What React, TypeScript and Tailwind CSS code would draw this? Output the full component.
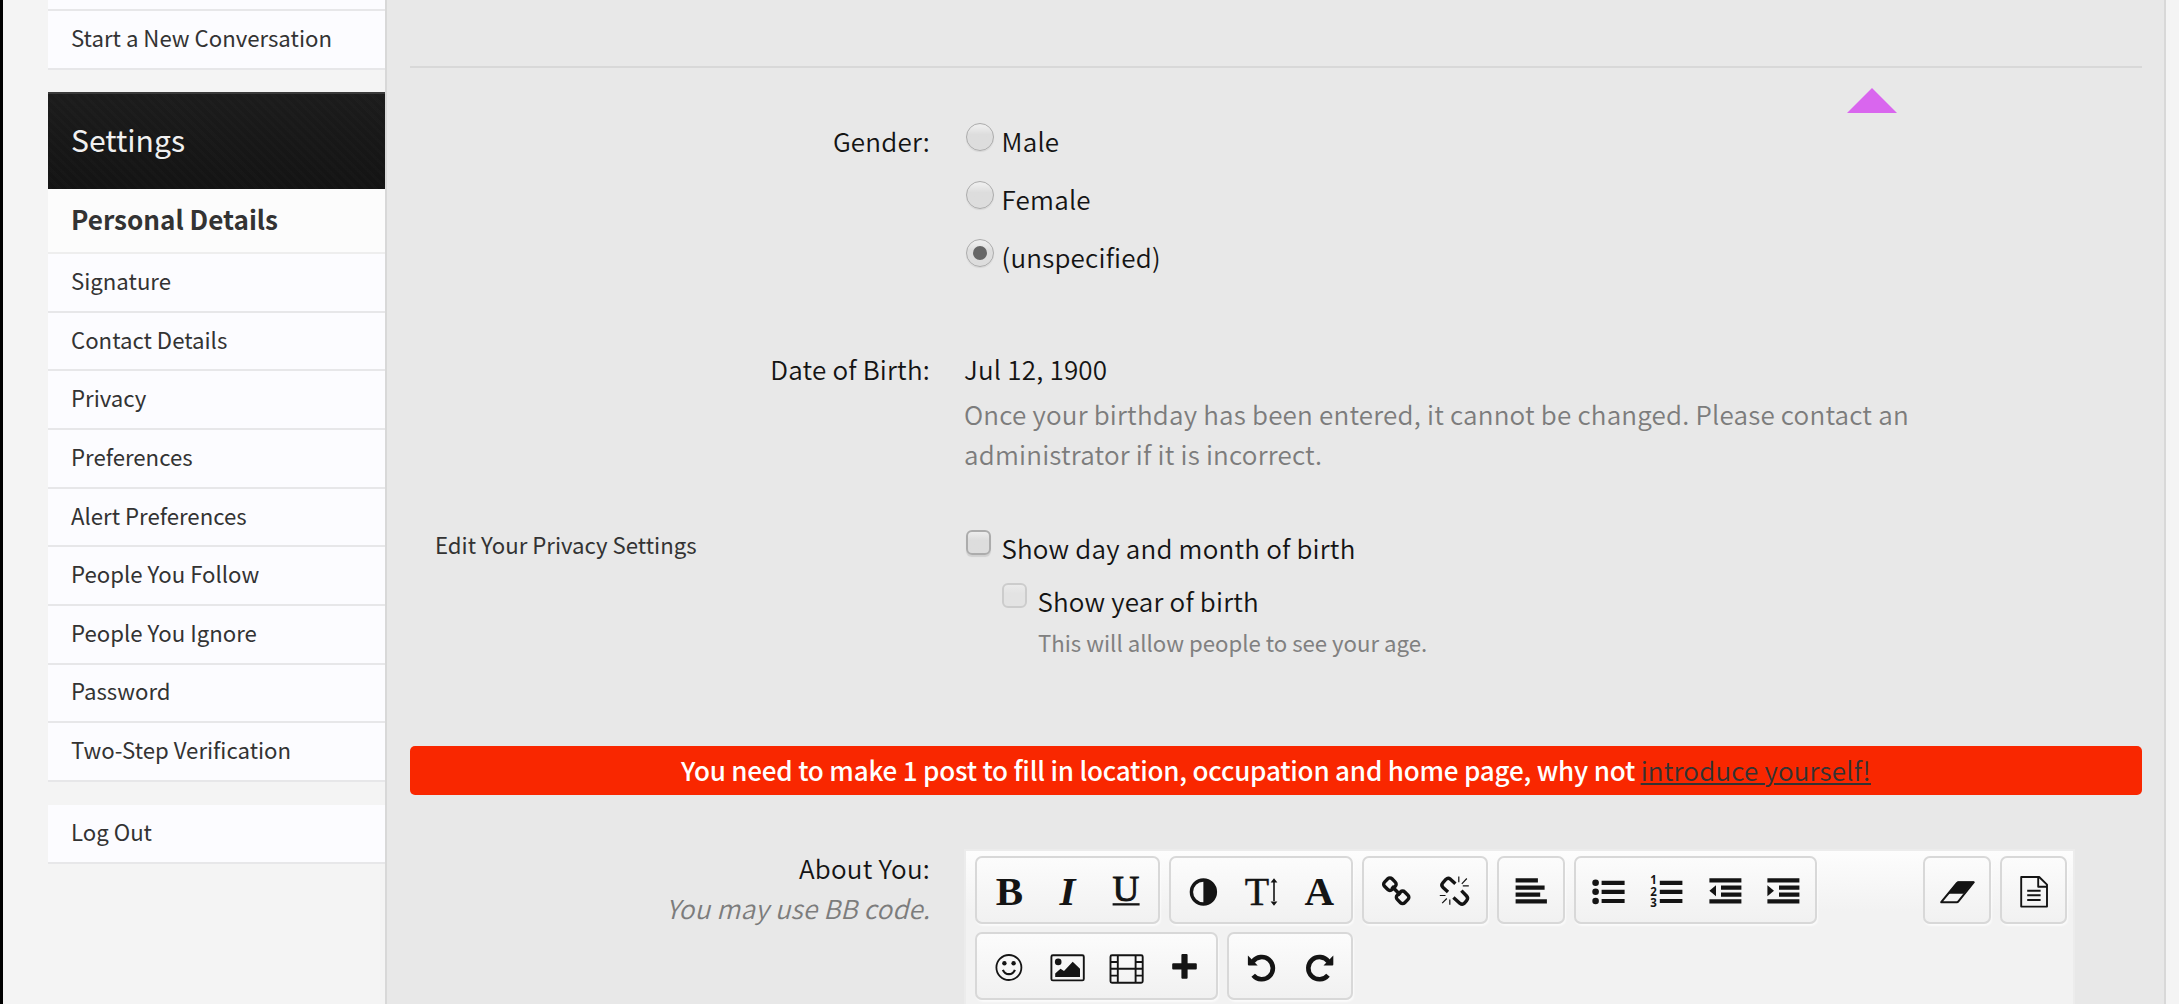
import React from 'react';
import clsx from 'clsx';

const INK = '#141414';

const settings = [
  'Signature',
  'Contact Details',
  'Privacy',
  'Preferences',
  'Alert Preferences',
  'People You Follow',
  'People You Ignore',
  'Password',
  'Two-Step Verification',
];

const SideLink: React.FC<{ children: React.ReactNode }> = ({ children }) => (
  <a className="flex h-[58.67px] items-center border-b-2 border-[#e7e7e9] bg-[#fcfcff] pb-[4.6px] pl-[23px] text-[22.2px] leading-none text-[#333333]">
    {children}
  </a>
);

const Radio: React.FC<{ label: string; checked?: boolean }> = ({ label, checked }) => (
  <label className="flex h-10 items-start">
    <span className="mt-[2px] ml-[2px] flex size-7 shrink-0 items-center justify-center rounded-full border border-[#acacac] bg-linear-to-b from-[#ededed] from-10% to-[#dddddd] to-40% shadow-[0_1px_1px_rgba(0,0,0,0.08)]">
      {checked && <span className="size-[14px] rounded-full bg-[#666666]" />}
    </span>
    <span className="ml-[7.6px]">{label}</span>
  </label>
);

const Checkbox: React.FC<{ label: string; disabled?: boolean }> = ({ label, disabled }) => (
  <label className="flex h-10 items-start">
    <span
      className={clsx(
        'mt-[2px] ml-[2px] size-[25px] shrink-0 rounded-[6px] border-2 bg-linear-to-b to-40%',
        disabled
          ? 'border-[#cccccc] from-[#ebebeb] to-[#e3e3e3]'
          : 'border-[#acacac] from-[#ededed] to-[#dddddd] shadow-[0_2px_1px_rgba(0,0,0,0.1)]',
      )}
    />
    <span className="ml-[10.4px]">{label}</span>
  </label>
);

const Tool: React.FC<{ children: React.ReactNode }> = ({ children }) => (
  <button className="flex w-[58.4px] items-center justify-center">
    <svg className="overflow-visible" width="40" height="40" viewBox="0 0 40 40" fill={INK}>
      {children}
    </svg>
  </button>
);

const ToolGroup: React.FC<{ children: React.ReactNode; className?: string }> = ({ children, className }) => (
  <div
    className={clsx(
      'flex h-[67.5px] rounded-[7px] border-2 border-[#d8d8d8] bg-linear-to-b from-[#fcfcfc] to-[#f1f1f1] px-[2.6px] shadow-[1px_2px_2px_rgba(255,255,255,0.7)]',
      className,
    )}
  >
    {children}
  </div>
);

const Bold = () => (
  <Tool>
    <text x="20.5" y="35.2" textAnchor="middle" fontFamily="Liberation Serif, serif" fontWeight="700" fontSize="41">B</text>
  </Tool>
);

const Italic = () => (
  <Tool>
    <text x="20.5" y="35.2" textAnchor="middle" fontFamily="Liberation Serif, serif" fontWeight="700" fontStyle="italic" fontSize="41">I</text>
  </Tool>
);

const Underline = () => (
  <Tool>
    <text x="20" y="30.8" textAnchor="middle" fontFamily="Liberation Serif, serif" fontSize="35" stroke={INK} strokeWidth="0.9" textLength="27" lengthAdjust="spacingAndGlyphs">U</text>
    <rect x="6.6" y="33.2" width="27" height="2.3" />
  </Tool>
);

const Contrast = () => (
  <Tool>
    <circle cx="20.4" cy="22" r="12" fill="none" stroke={INK} strokeWidth="3.4" />
    <path d="M20.4 9.5a12.5 12.5 0 0 1 0 25z" />
  </Tool>
);

const TextSize = () => (
  <Tool>
    <text x="3.7" y="35.2" fontFamily="Liberation Serif, serif" fontSize="40" stroke={INK} strokeWidth="0.4">T</text>
    <path d="M32.2 12h1.6v20h-1.6zM33 8.2l3.4 4.2h-6.8zM33 35.8l3.4-4.2h-6.8z" />
  </Tool>
);

const FontFace = () => (
  <Tool>
    <text x="20.5" y="35.2" textAnchor="middle" fontFamily="Liberation Serif, serif" fontWeight="700" fontSize="41">A</text>
  </Tool>
);

const LinkIcon = () => (
  <Tool>
    <g fill="none" stroke={INK} strokeWidth="3.4">
      <rect x="8.6" y="8.9" width="10.6" height="10.6" rx="3" transform="rotate(45 13.9 14.2)" />
      <rect x="21.3" y="22" width="10.6" height="10.6" rx="3" transform="rotate(45 26.6 27.3)" />
      <path d="M15.8 16.2l8.6 8.8" />
    </g>
  </Tool>
);

const Unlink = () => (
  <Tool>
    <g fill="none" stroke={INK}>
      <path strokeWidth="3.4" strokeLinejoin="round" d="M14 22l-5.2-4.8q-2-2.2 0-4.4l3-3.4q2.2-2 4.6-.2l5 4.6M19.4 27.4l6.6 6q2.4 1.8 4.6-.4l2-2.4q2-2.4 0-4.6l-5.2-5.4" />
      <path strokeWidth="1.2" d="M24.8 6.5v5.7M32.8 8.5l-5 5.3M34.8 15.8h-6M5.8 25.5h5.7M8.2 33.2l4.6-4.7M15.8 34.8v-5.3" />
    </g>
  </Tool>
);

const Align = () => (
  <Tool>
    <path d="M4.6 8.2h22.3v4.2H4.6zM4.6 15.5h29v4.2h-29zM4.6 22.5h24.6v4.2H4.6zM4.6 29.2h31.3v4.2H4.6z" />
  </Tool>
);

const BulletList = () => (
  <Tool>
    <circle cx="7.6" cy="12.8" r="3.3" />
    <circle cx="7.6" cy="21.8" r="3.3" />
    <circle cx="7.6" cy="31" r="3.3" />
    <path d="M13.6 10.7h23v4.2h-23zM13.6 19.7h23v4.2h-23zM13.6 28.9h23v4.2h-23z" />
  </Tool>
);

const NumberList = () => (
  <Tool>
    <g fontFamily="Noto Sans, sans-serif" fontWeight="700" fontSize="11.5">
      <text x="4.2" y="14.4">1</text>
      <text x="4.2" y="25.8">2</text>
      <text x="4.2" y="37.4">3</text>
    </g>
    <path d="M13.8 10.7h22.6v4.2H13.8zM13.8 19.7h22.6v4.2H13.8zM13.8 28.9h22.6v4.2H13.8z" />
  </Tool>
);

const Outdent = () => (
  <Tool>
    <path d="M4.4 8.2h32v4.2h-32zM16 15.5h20.4v4.2H16zM16 22.5h20.4v4.2H16zM4.4 29.2h32v4.2h-32zM4.4 20.8l6.6-5.5v11z" />
  </Tool>
);

const Indent = () => (
  <Tool>
    <path d="M4.4 8.2h32v4.2h-32zM16 15.5h20.4v4.2H16zM16 22.5h20.4v4.2H16zM4.4 29.2h32v4.2h-32zM11 20.8l-6.6-5.5v11z" />
  </Tool>
);

const EraserIcon = () => (
  <Tool>
    <path fill="none" stroke={INK} strokeWidth="2" strokeLinejoin="round" d="M4.2 32.2h15.6q1 0 1.6-.8L36.8 12.2H21.6q-1 0-1.6.8z" />
    <path d="M20.8 11.6H37L26.6 23.8H11z" />
  </Tool>
);

const Source = () => (
  <Tool>
    <path fill="none" stroke={INK} strokeWidth="1.9" strokeLinejoin="round" d="M7.2 7h18l7.8 7.6v22H7.2zM24.2 7v9.8H33" />
    <path d="M13.2 19.8h13.4v2H13.2zM13.2 24.3h13.4v2H13.2zM13.2 28.9h13.4v2H13.2z" />
  </Tool>
);

const Smiley = () => (
  <Tool>
    <circle cx="19.9" cy="21.5" r="12.5" fill="none" stroke={INK} strokeWidth="1.8" />
    <circle cx="15.4" cy="17.2" r="2.2" />
    <circle cx="24.6" cy="17.2" r="2.2" />
    <path fill="none" stroke={INK} strokeWidth="2.2" d="M13.9 23.8q1.8 4.4 6 4.4t6-4.4" />
  </Tool>
);

const Picture = () => (
  <Tool>
    <rect x="4.4" y="9.2" width="32.4" height="25.2" rx="1.5" fill="none" stroke={INK} strokeWidth="1.9" />
    <circle cx="11.2" cy="15.9" r="3.3" />
    <path d="M8.2 30.9v-3.4l5.3-4.8 3.5 2.4 8.7-9.3 7.3 7v8.1z" />
  </Tool>
);

const Film = () => (
  <Tool>
    <g fill="none" stroke={INK} strokeWidth="1.9">
      <rect x="4.5" y="9.2" width="32.2" height="27.6" rx="1.5" />
      <path d="M11.8 9v28M29.6 9v28M4.5 22.7h32.2M4.5 16h7.3M4.5 29.6h7.3M29.6 16h7.1M29.6 29.6h7.1" />
    </g>
  </Tool>
);

const PlusIcon = () => (
  <Tool>
    <path d="M18.4 8h4.2q1 0 1 1v8.3h8.2q1 0 1 1v4.2q0 1-1 1h-8.2v8.2q0 1-1 1h-4.2q-1 0-1-1v-8.2H9.2q-1 0-1-1v-4.2q0-1 1-1h8.2V9q0-1 1-1z" />
  </Tool>
);

const undoShape = (
  <>
    <path fill="none" stroke={INK} strokeWidth="4.6" d="M11.8 15.6A11.1 11.1 0 1 1 12.2 29.2" />
    <path d="M6.9 9.4v9q0 1 1 1h8.8z" />
  </>
);

const Undo = () => <Tool>{undoShape}</Tool>;

const Redo = () => (
  <Tool>
    <g transform="matrix(-1 0 0 1 41.2 0)">{undoShape}</g>
  </Tool>
);

const Sidebar = () => (
  <aside className="w-[385px] shrink-0 overflow-hidden border-l-[3px] border-black pl-[45px]">
    <div className="h-[11px] border-b-2 border-[#e7e7e9] bg-[#fcfcff]" />
    <SideLink>Start a New Conversation</SideLink>
    <h3 className="mt-[22.3px] flex h-[97px] items-center border-t-2 border-[#3a3a3a] bg-[repeating-linear-gradient(45deg,rgba(255,255,255,0.012)_0_3px,transparent_3px_7px),linear-gradient(#1c1c1c,#131313)] pb-[5px] pl-[23px] text-[30.1px] leading-none text-[#f0f0f0]">
      Settings
    </h3>
    <a className="flex h-[65px] items-center border-b-2 border-[#eeeeee] bg-[#fcfcfc] pb-[2px] pl-[23px] text-[26.1px] leading-none font-bold text-[#333333]">
      Personal Details
    </a>
    {settings.map((item) => (
      <SideLink key={item}>{item}</SideLink>
    ))}
    <div className="mt-[23px]">
      <SideLink>Log Out</SideLink>
    </div>
  </aside>
);

const Editor = () => (
  <div className="h-[200px] w-[1110.6px] border-2 border-[#ececec] bg-[linear-gradient(#fdfdfd,#f2f2f2_60px)] px-[9.3px] pt-[5px]">
    <div className="flex gap-[9.1px]">
      <ToolGroup>
        <Bold />
        <Italic />
        <Underline />
      </ToolGroup>
      <ToolGroup>
        <Contrast />
        <TextSize />
        <FontFace />
      </ToolGroup>
      <ToolGroup>
        <LinkIcon />
        <Unlink />
      </ToolGroup>
      <ToolGroup>
        <Align />
      </ToolGroup>
      <ToolGroup>
        <BulletList />
        <NumberList />
        <Outdent />
        <Indent />
      </ToolGroup>
      <ToolGroup className="ml-auto">
        <EraserIcon />
      </ToolGroup>
      <ToolGroup className="-mr-[4px]">
        <Source />
      </ToolGroup>
    </div>
    <div className="mt-[8.5px] flex gap-[9.1px]">
      <ToolGroup>
        <Smiley />
        <Picture />
        <Film />
        <PlusIcon />
      </ToolGroup>
      <ToolGroup>
        <Undo />
        <Redo />
      </ToolGroup>
    </div>
  </div>
);

const row = 'grid grid-cols-[519px_1fr] gap-x-[35px]';

export default function App() {
  return (
    <div className="flex h-[1004px] w-[2179px] overflow-hidden bg-[#f4f4f4] font-['Noto_Sans_CJK_SC',sans-serif]">
      <Sidebar />
      <main className="relative w-[1781px] shrink-0 border-x-2 border-[#d8d8d8] bg-[#e8e8e8] pt-[66px] pr-[22px] pl-[23px] text-[26px] leading-[40px] font-[350] tracking-[0.2px] text-[#141414]">
        <div className="h-[2px] bg-[#d8d8d8]" />
        <svg className="absolute top-[88px] left-[1460px]" width="50" height="25" viewBox="0 0 50 25">
          <path d="M25 0l25 25H0z" fill="#d966ee" />
        </svg>

        <div className={clsx(row, 'mt-[53px]')}>
          <div className="-mr-px text-right">Gender:</div>
          <div className="flex flex-col gap-[18px]">
            <Radio label="Male" />
            <Radio label="Female" />
            <Radio label="(unspecified)" checked />
          </div>
        </div>

        <div className={clsx(row, 'mt-[72px]')}>
          <div className="-mr-px text-right">Date of Birth:</div>
          <div>
            <div>Jul 12, 1900</div>
            <p className="mt-[5px] text-[#7c7c7c]">
              Once your birthday has been entered, it cannot be changed. Please contact an
              <br />
              administrator if it is incorrect.
            </p>
          </div>
        </div>

        <div className={clsx(row, 'mt-[50px]')}>
          <a className="pl-[25px] text-[22.2px] font-normal tracking-normal text-[#333333]">Edit Your Privacy Settings</a>
          <div className="pt-[4px]">
            <Checkbox label="Show day and month of birth" />
            <div className="mt-[13px] pl-[36px]">
              <Checkbox label="Show year of birth" disabled />
              <p className="mt-[1px] pl-[38px] text-[22.2px] font-normal tracking-normal text-[#808080]">
                This will allow people to see your age.
              </p>
            </div>
          </div>
        </div>

        <div className="mt-[84px] h-[49px] rounded-[5px] bg-[#f92700] text-center leading-[48px] font-medium tracking-[-0.19px] text-white">
          You need to make 1 post to fill in location, occupation and home page, why not{' '}
          <a className="font-[350] tracking-[0.2px] text-[#333333] underline">introduce yourself!</a>
        </div>

        <div className={clsx(row, 'mt-[54px]')}>
          <div className="-mt-[1px] -mr-px text-right">
            <div>About You:</div>
            <div className="text-[#7c7c7c] italic">You may use BB code.</div>
          </div>
          <Editor />
        </div>
      </main>
    </div>
  );
}
